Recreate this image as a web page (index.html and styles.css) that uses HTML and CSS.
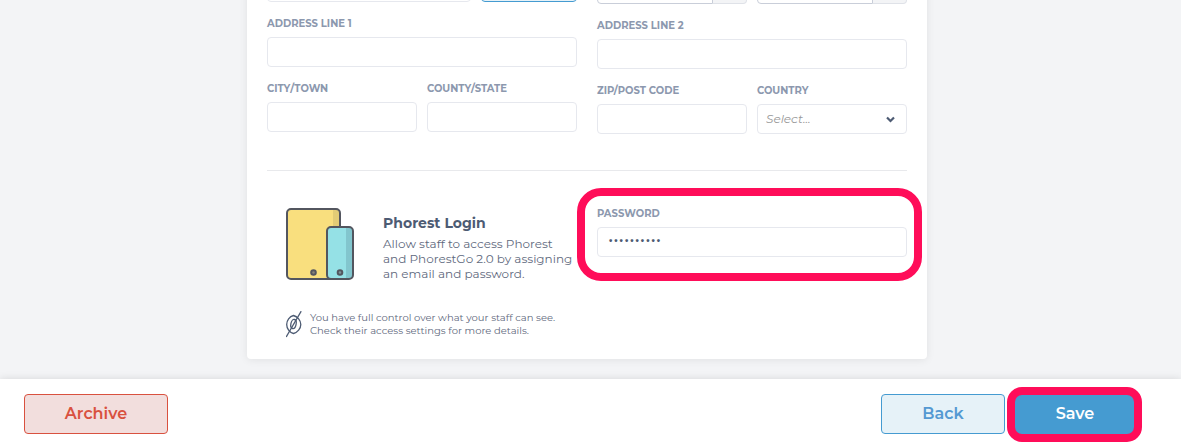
FILE: index.html
```html
<!DOCTYPE html>
<html lang="en">
<head>
  <meta charset="UTF-8">
  <title>Edit Staff Member</title>
  <meta name="viewport" content="width=device-width, initial-scale=1.0">
  <link rel="stylesheet" href="styles.css">
</head>
<body>

<main class="page">
  <form class="card" id="staffForm">

    <!-- Contact details -->
    <div class="columns">
      <div class="column">
        <div class="row row-action">
          <input type="email" class="control" aria-label="Email">
          <button type="button" class="verify" aria-label="Verify"></button>
        </div>
        <div class="field">
          <label for="address1">ADDRESS LINE 1</label>
          <input type="text" class="control" id="address1">
        </div>
        <div class="row">
          <div class="field">
            <label for="city">CITY/TOWN</label>
            <input type="text" class="control" id="city">
          </div>
          <div class="field">
            <label for="county">COUNTY/STATE</label>
            <input type="text" class="control" id="county">
          </div>
        </div>
      </div>

      <div class="column column-right">
        <div class="row">
          <div class="addon-group">
            <input type="text" class="control" aria-label="Service commission">
            <span class="addon"></span>
          </div>
          <div class="addon-group">
            <input type="text" class="control" aria-label="Product commission">
            <span class="addon"></span>
          </div>
        </div>
        <div class="field">
          <label for="address2">ADDRESS LINE 2</label>
          <input type="text" class="control" id="address2">
        </div>
        <div class="row">
          <div class="field">
            <label for="zip">ZIP/POST CODE</label>
            <input type="text" class="control" id="zip">
          </div>
          <div class="field">
            <label for="country">COUNTRY</label>
            <div class="select-wrap">
              <select class="control" id="country">
                <option>Select...</option>
              </select>
              <svg class="chevron" width="9" height="7" viewBox="0 0 9 7" aria-hidden="true">
                <path d="M1 1.5 L4.5 5 L8 1.5" fill="none" stroke="#4d5b73" stroke-width="2.2"/>
              </svg>
            </div>
          </div>
        </div>
      </div>
    </div>

    <hr class="divider">

    <!-- Login -->
    <div class="columns login">
      <div class="login-info">
        <div class="intro">
          <svg width="68" height="72" viewBox="0 0 68 72" aria-hidden="true">
            <rect x="1" y="1" width="53" height="70" rx="4" fill="#f9df7e"/>
            <path d="M47 1h3a4 4 0 0 1 4 4v62a4 4 0 0 1-4 4h-3z" fill="#e3cc76"/>
            <rect x="1" y="1" width="53" height="70" rx="4" fill="none" stroke="#53565f" stroke-width="2"/>
            <circle cx="27.500" cy="64.500" r="2.300" fill="#8a8578" stroke="#53565f" stroke-width="2"/>
            <rect x="41" y="19" width="26" height="52" rx="4" fill="#95e1e6"/>
            <path d="M60 19h3a4 4 0 0 1 4 4v44a4 4 0 0 1-4 4h-3z" fill="#82c6ce"/>
            <rect x="41" y="19" width="26" height="52" rx="4" fill="none" stroke="#53565f" stroke-width="2"/>
            <circle cx="54" cy="64.500" r="2.300" fill="#7e9498" stroke="#53565f" stroke-width="2"/>
          </svg>
          <div>
            <h2>Phorest Login</h2>
            <p>Allow staff to access Phorest<br>and PhorestGo 2.0 by assigning<br>an email and password.</p>
          </div>
        </div>
        <div class="note">
          <svg width="16" height="27" viewBox="0 0 16 27" fill="none" stroke="#4d5b73" aria-hidden="true">
            <path d="M7.500 4.500C3.500 5.500 .7 9.500 .7 13.500S3.500 21.500 7.500 22.500C11.500 21.500 14.800 17.500 14.800 13.500S11.500 5.500 7.500 4.500Z" stroke-width="1.300"/>
            <ellipse cx="7.500" cy="13" rx="2.600" ry="4.600" stroke-width="1.300" transform="rotate(12 7.500 13)"/>
            <path d="M15.200 .2L.2 26" stroke-width="1.300"/>
          </svg>
          <p>You have full control over what your staff can see.<br>Check their access settings for more details.</p>
        </div>
      </div>

      <div class="field password-field">
        <label for="password">PASSWORD</label>
        <input type="password" class="control" id="password" value="staff12345">
        <span class="highlight highlight-password"></span>
      </div>
    </div>
  </form>
</main>

<footer class="actions">
  <button type="button" class="btn btn-archive">Archive</button>
  <div class="actions-right">
    <button type="button" class="btn btn-back">Back</button>
    <div class="save-wrap">
      <button type="submit" form="staffForm" class="btn btn-save">Save</button>
      <span class="highlight highlight-save"></span>
    </div>
  </div>
</footer>

</body>
</html>
```
FILE: styles.css
```css
* {
  box-sizing: border-box;
}

body {
  display: flex;
  flex-direction: column;
  min-height: 100vh;
  margin: 0;
  background-color: #f3f4f6;
  color: #4d5b73;
  font-family: Montserrat, Inter, sans-serif;
}

.page {
  flex: 1;
  padding: 0 7px 20px 0;
}

.card {
  max-width: 680px;
  margin: -28px auto 0;
  padding: 0 20px 21px;
  background-color: #fff;
  border-radius: 4px;
  box-shadow: 0 1px 8px rgba(0, 0, 0, 0.08);
}

.columns {
  display: grid;
  grid-template-columns: minmax(0, 1fr) minmax(0, 1fr);
  gap: 20px;
}

.column {
  display: flex;
  flex-direction: column;
  gap: 14px;
}

.column-right {
  padding-top: 2px;
}

.row {
  display: grid;
  grid-template-columns: 1fr 1fr;
  gap: 10px;
}

.row-action {
  grid-template-columns: 1fr 96px;
}

.field {
  display: flex;
  flex-direction: column;
  gap: 5px;
}

label {
  color: #8c98ae;
  font-size: 10px;
  font-weight: 700;
  line-height: 16px;
}

.control {
  width: 100%;
  height: 30px;
  padding: 0 10px;
  background-color: #fff;
  border: 1px solid #e6e8ee;
  border-radius: 4px;
  color: #4d5b73;
  font-family: inherit;
  font-size: 12px;
}

.verify {
  height: 30px;
  background-color: #e6f2f8;
  border: 1px solid #459bd1;
  border-radius: 4px;
}

.addon-group {
  display: flex;
}

.addon-group .control {
  flex: 1;
  min-width: 0;
  border-color: #c9ced9;
  border-radius: 4px 0 0 4px;
}

.addon {
  width: 34px;
  background-color: #f3f4f6;
  border: 1px solid #dfe2e8;
  border-left: none;
  border-radius: 0 4px 4px 0;
}

.select-wrap {
  position: relative;
}

select.control {
  display: block;
  padding: 0 8px 2px;
  appearance: none;
  color: #999;
  font-style: italic;
}

.chevron {
  position: absolute;
  top: 12px;
  right: 12px;
  pointer-events: none;
}

.divider {
  height: 1px;
  margin: 36px 0 35px;
  background-color: #e8e9ec;
  border: none;
}

.login-info {
  display: flex;
  flex-direction: column;
  gap: 30px;
  padding: 2px 0 0 19px;
}

.intro {
  display: flex;
  gap: 29px;
}

.intro svg,
.note svg {
  flex: none;
}

.intro h2 {
  margin: 6px 0 4px;
  font-size: 14px;
  font-weight: 700;
  line-height: 18px;
}

.intro p {
  margin: 0;
  color: #5f6a7e;
  font-size: 12px;
  line-height: 15px;
  white-space: nowrap;
}

.note {
  display: flex;
  gap: 8px;
}

.note p {
  margin: 0;
  color: #5f6a7e;
  font-size: 10px;
  line-height: 13px;
  white-space: nowrap;
}

.password-field {
  position: relative;
  align-self: start;
}

.password-field .control {
  padding-bottom: 4px;
  font-size: 18px;
}

.highlight {
  position: absolute;
  border: 8px solid #ff0d59;
  pointer-events: none;
}

.highlight-password {
  top: -18px;
  right: -15px;
  bottom: -24px;
  left: -20px;
  border-radius: 24px;
}

.actions {
  display: flex;
  justify-content: space-between;
  padding: 15px 44px 12px 24px;
  background-color: #fff;
  box-shadow: 0 0 8px rgba(0, 0, 0, 0.12);
}

.actions-right {
  display: flex;
  gap: 8px;
}

.btn {
  width: 124px;
  height: 40px;
  padding-bottom: 3px;
  border: 1px solid;
  border-radius: 4px;
  font-family: inherit;
  font-size: 16px;
  font-weight: 600;
  cursor: pointer;
}

.btn-archive {
  width: 144px;
  background-color: #f2dedd;
  border-color: #d9513f;
  color: #d9513f;
}

.btn-back {
  background-color: #e6f2f8;
  border-color: #459bd1;
  color: #5499d2;
}

.save-wrap {
  position: relative;
}

.btn-save {
  background-color: #459bd1;
  border-color: #459bd1;
  color: #fff;
}

.highlight-save {
  top: -7px;
  right: -5px;
  bottom: -8px;
  left: -6px;
  border-radius: 15px;
}
```
